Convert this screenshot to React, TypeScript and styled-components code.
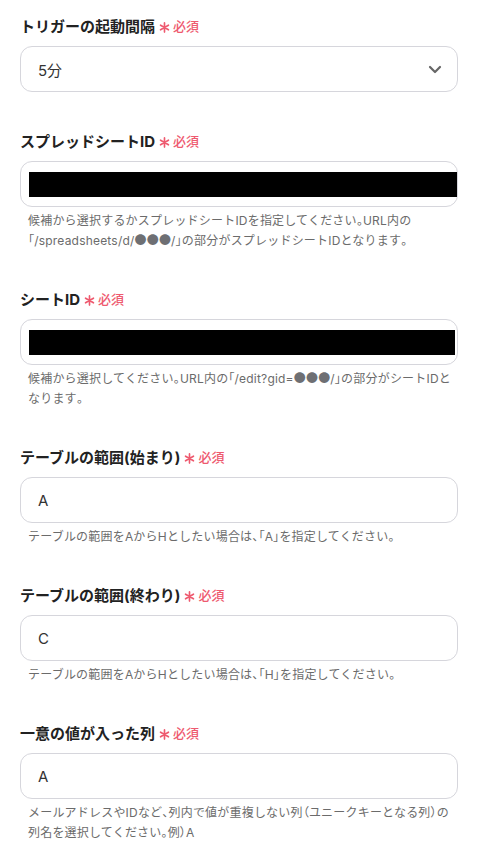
import React from "react";
import styled, { createGlobalStyle } from "styled-components";

const GlobalStyle = createGlobalStyle`
  html, body {
    margin: 0;
    padding: 0;
    background: #ffffff;
  }
  body {
    font-family: "Inter", "Noto Sans CJK JP", sans-serif;
    color: #222;
  }
`;

const Page = styled.div`
  display: flex;
  flex-direction: column;
  gap: 37px;
  padding: 14px 24px 20px 20px;
`;

const Field = styled.div`
  display: flex;
  flex-direction: column;
`;

const Label = styled.div`
  display: flex;
  align-items: center;
  height: 22px;
  margin-bottom: 10px;
  font-size: 15px;
  font-weight: 700;
  color: #222;
`;

const Required = styled.span`
  display: inline-flex;
  align-items: center;
  margin-left: 4px;
  color: #ee5a6f;
  font-size: 13px;
  font-weight: 500;
  gap: 3px;
`;

const StarIcon = styled.svg`
  position: relative;
  top: 2px;
`;

const Box = styled.div<{ $select?: boolean }>`
  box-sizing: border-box;
  height: 46px;
  border: 1px solid #d6d6dc;
  border-radius: 12px;
  display: flex;
  align-items: center;
  justify-content: space-between;
  padding: 0 ${(p) => (p.$select ? "15px" : "0")} 0 17px;
  font-size: 15px;
  color: #333;
  background: #fff;
`;

const Redacted = styled.div<{ $inset?: number }>`
  flex: 1;
  height: 25px;
  margin-left: -9px;
  margin-right: ${(p) => p.$inset ?? 0}px;
  background: #000;
`;

const HelpText = styled.div`
  margin-top: 3px;
  padding-left: 8px;
  padding-right: 2px;
  font-size: 12px;
  line-height: 19px;
  letter-spacing: 0.2px;
  color: #6b6b6b;
`;

// punctuation is set half-width, kana stay full-width
const Punct = styled.span`
  font-family: "Noto Sans CJK JP", sans-serif;
  font-feature-settings: "palt";
`;

const Dots = styled.span`
  font-family: "Noto Sans CJK JP", sans-serif;
  color: #6e6f73;
`;

const Help: React.FC<{ text: string }> = ({ text }) => {
  const parts = text.split(/([、。「」（）]|●●●)/).filter(Boolean);
  return (
    <HelpText>
      {parts.map((p, i) =>
        p === "●●●" ? (
          <Dots key={i}>{p}</Dots>
        ) : /^[、。「」（）]$/.test(p) ? (
          <Punct key={i}>{p}</Punct>
        ) : (
          <React.Fragment key={i}>{p}</React.Fragment>
        )
      )}
    </HelpText>
  );
};

const Chevron = () => (
  <svg width="14" height="9" viewBox="0 0 14 9" fill="none" stroke="#666" strokeWidth="2.2" strokeLinecap="round" strokeLinejoin="round">
    <path d="M2 2l5 5 5-5" />
  </svg>
);

const Star = () => (
  <StarIcon width="11" height="11" viewBox="0 0 12 12" stroke="#ee5a6f" strokeWidth="1.8" strokeLinecap="round">
    <path d="M6 1v10M1.7 3.5l8.6 5M1.7 8.5l8.6-5" />
  </StarIcon>
);

const Req = () => (
  <Required>
    <Star />
    必須
  </Required>
);

const App: React.FC = () => {
  return (
    <>
      <GlobalStyle />
      <Page>
        <Field>
          <Label>
            トリガーの起動間隔
            <Req />
          </Label>
          <Box $select>
            <span>5分</span>
            <Chevron />
          </Box>
        </Field>

        <Field>
          <Label>
            スプレッドシートID
            <Req />
          </Label>
          <Box>
            <Redacted $inset={0} />
          </Box>
          <Help text="候補から選択するかスプレッドシートIDを指定してください。URL内の「/spreadsheets/d/●●●/」の部分がスプレッドシートIDとなります。" />
        </Field>

        <Field>
          <Label>
            シートID
            <Req />
          </Label>
          <Box>
            <Redacted $inset={2} />
          </Box>
          <Help text="候補から選択してください。URL内の「/edit?gid=●●●/」の部分がシートIDとなります。" />
        </Field>

        <Field>
          <Label>
            テーブルの範囲(始まり)
            <Req />
          </Label>
          <Box>A</Box>
          <Help text="テーブルの範囲をAからHとしたい場合は、「A」を指定してください。" />
        </Field>

        <Field>
          <Label>
            テーブルの範囲(終わり)
            <Req />
          </Label>
          <Box>C</Box>
          <Help text="テーブルの範囲をAからHとしたい場合は、「H」を指定してください。" />
        </Field>

        <Field>
          <Label>
            一意の値が入った列
            <Req />
          </Label>
          <Box>A</Box>
          <Help text="メールアドレスやIDなど、列内で値が重複しない列（ユニークキーとなる列）の列名を選択してください。例）A" />
        </Field>
      </Page>
    </>
  );
};

export default App;
